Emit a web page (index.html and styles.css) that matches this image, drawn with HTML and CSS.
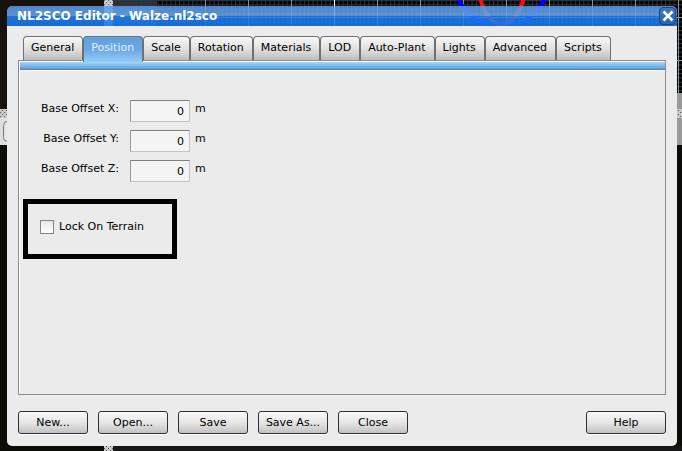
FILE: index.html
```html
<!DOCTYPE html>
<html lang="en">

<head>
  <meta charset="UTF-8">
  <meta name="viewport" content="width=device-width, initial-scale=1.0">
  <title>NL2SCO Editor - Walze.nl2sco</title>
  <link rel="stylesheet" href="styles.css">
</head>

<body>
  <!-- track view behind the dialog -->
  <svg class="desktop" viewBox="0 0 682 451" preserveAspectRatio="xMinYMin slice" aria-hidden="true">
    <defs>
      <pattern id="fine" x="248" y="0" width="4.3" height="4.3" patternUnits="userSpaceOnUse">
        <path d="M0.5 0V4.3M0 0.5H4.3" stroke="#30353b" stroke-width="1" />
      </pattern>
      <pattern id="coarse" x="248" y="17" width="43" height="43" patternUnits="userSpaceOnUse">
        <path d="M0.5 0V43M0 0.5H43" stroke="#8b9095" stroke-width="1" />
      </pattern>
      <pattern id="dots" width="4" height="4" patternUnits="userSpaceOnUse">
        <rect width="4" height="4" fill="#c9c9c9" />
        <path d="M0 0h1v1H0zM2 2h1v1H2z" fill="#555" />
      </pattern>
    </defs>
    <rect width="682" height="451" fill="#0b0c08" />
    <rect width="104" height="109" fill="#15110b" />
    <rect x="113" width="569" height="93" fill="#000" />
    <rect x="113" width="44" height="93" fill="#26303f" />
    <rect x="113" width="569" height="93" fill="url(#fine)" />
    <rect x="205" width="477" height="93" fill="url(#coarse)" />
    <path d="M334.5 0V93" stroke="#fff" />
    <path d="M458 -2C464 12 476 25 502 25S538 12 545 -2" fill="none" stroke="#00f" stroke-width="4" />
    <path d="M480 -2C484 12 490 24 502 24S520 12 524 -2" fill="none" stroke="#f01414" stroke-width="4" />
    <rect x="104" width="9" height="451" fill="url(#dots)" />
    <rect y="109" width="20" height="36" fill="#dedede" />
    <rect y="109" width="20" height="9" fill="url(#dots)" />
    <rect x="3.5" y="121.5" width="20" height="20" rx="4" fill="#e6e6e6" stroke="#777" />
    <rect x="670" y="93" width="12" height="52" fill="#999" />
    <rect x="670" y="109" width="12" height="9" fill="url(#dots)" />
    <rect x="113" y="446" width="569" height="5" fill="#171717" />
  </svg>

  <main class="window">
    <header class="titlebar">
      <h1 class="title">NL2SCO Editor - Walze.nl2sco</h1>
      <button class="close" type="button" aria-label="Close window">
        <svg width="12" height="12" viewBox="0 0 12 12">
          <path d="M1.5 1.5L10.5 10.5M10.5 1.5L1.5 10.5" stroke="#fff" stroke-width="2.6" />
        </svg>
      </button>
    </header>

    <form class="content">
      <div class="tabs" role="tablist">
        <button class="tab" type="button" role="tab">General</button>
        <button class="tab active" type="button" role="tab" aria-selected="true">Position</button>
        <button class="tab" type="button" role="tab">Scale</button>
        <button class="tab" type="button" role="tab">Rotation</button>
        <button class="tab" type="button" role="tab">Materials</button>
        <button class="tab" type="button" role="tab">LOD</button>
        <button class="tab" type="button" role="tab">Auto-Plant</button>
        <button class="tab" type="button" role="tab">Lights</button>
        <button class="tab" type="button" role="tab">Advanced</button>
        <button class="tab" type="button" role="tab">Scripts</button>
      </div>

      <section class="panel" role="tabpanel">
        <div class="fields">
          <label for="offsetX">Base Offset X:</label>
          <input type="text" id="offsetX" value="0">
          <span>m</span>
          <label for="offsetY">Base Offset Y:</label>
          <input type="text" id="offsetY" value="0">
          <span>m</span>
          <label for="offsetZ">Base Offset Z:</label>
          <input type="text" id="offsetZ" value="0">
          <span>m</span>
        </div>

        <div class="lock">
          <input type="checkbox" id="lock">
          <label for="lock">Lock On Terrain</label>
        </div>
      </section>

      <footer class="buttons">
        <button class="btn" type="button">New...</button>
        <button class="btn" type="button">Open...</button>
        <button class="btn" type="button">Save</button>
        <button class="btn" type="button">Save As...</button>
        <button class="btn" type="button">Close</button>
        <button class="btn help" type="button">Help</button>
      </footer>
    </form>
  </main>
</body>

</html>
```

FILE: styles.css
```css
* {
  box-sizing: border-box;
}

body {
  margin: 0;
  padding: 6px 5px 5px 7px;
  min-height: 100vh;
  display: flex;
  background-color: #0b0c08;
  color: #000;
}

body,
button,
input {
  font-family: "DejaVu Sans", sans-serif;
  font-size: 11px;
}

.desktop {
  position: absolute;
  top: 0;
  left: 0;
  width: 100%;
  height: 100%;
  z-index: -1;
}

.window {
  flex: 1;
  display: flex;
  flex-direction: column;
  border-radius: 5px;
  overflow: hidden;
}

.titlebar {
  display: flex;
  align-items: center;
  justify-content: space-between;
  height: 20px;
  padding: 0 1px 0 10px;
  background: linear-gradient(rgba(92, 155, 235, 0.85) 0, rgba(104, 168, 240, 0.85) 50%, rgba(34, 130, 245, 0.85) 52%, rgba(22, 120, 240, 0.88) 100%);
}

.title {
  margin: 0;
  font-size: 12px;
  line-height: 16px;
  color: #fff;
}

.close {
  display: flex;
  align-items: center;
  justify-content: center;
  width: 17px;
  height: 18px;
  padding: 0;
  border: 1px solid #1b467d;
  border-radius: 4px;
  background: linear-gradient(#4576b5, #2564b4);
}

.content {
  flex: 1;
  display: flex;
  flex-direction: column;
  padding: 10px 11px 12px;
  background-color: #ebebeb;
}

.tabs {
  display: flex;
  padding-left: 5px;
}

.tab {
  height: 24px;
  padding: 0 8px 3px 7px;
  border: 1px solid #707070;
  border-bottom: 0;
  border-radius: 4px 4px 0 0;
  background: linear-gradient(#f7f7f7, #e2e2e2 50%, #bdbdbd);
  color: #000;
}

.tab.active {
  height: 26px;
  margin-bottom: -2px;
  padding-bottom: 5px;
  z-index: 1;
  background: linear-gradient(#62a0de, #6aa8e4 50%, #94ccf8);
  color: #e4f2ff;
}

.panel {
  flex: 1;
  border: 1px solid #8c8c8c;
  box-shadow: inset 1px 1px #fff;
}

.panel::before {
  content: "";
  display: block;
  height: 7px;
  margin: 1px 0 0 1px;
  border-bottom: 1px solid #667f99;
  background: linear-gradient(#a2d8fc, #5a9fe0);
  box-shadow: 0 1px #fff;
}

.fields {
  display: grid;
  grid-template-columns: 100px 60px auto;
  column-gap: 11px;
  row-gap: 8px;
  padding-top: 30px;
  line-height: 18px;
}

.fields label {
  text-align: right;
}

.fields span {
  margin-left: -6px;
}

.fields input {
  width: 60px;
  height: 22px;
  padding: 0 5px;
  border: 1px solid #c4c4c4;
  border-top: 1px solid #808080;
  border-left-color: #999;
  border-radius: 0;
  background-color: #f4f4f4;
  text-align: right;
}

.lock {
  display: flex;
  align-items: center;
  gap: 5px;
  width: 154px;
  height: 60px;
  margin: 17px 0 0 4px;
  padding: 0 12px 5px;
  border: 5px solid #000;
}

.lock input {
  appearance: none;
  width: 14px;
  height: 14px;
  margin: 0;
  border: 1px solid #858585;
  background: linear-gradient(#e8e8e8, #fff);
}

.lock input:checked {
  background: #2078e2;
}

.buttons {
  display: flex;
  gap: 10px;
  margin-top: 16px;
}

.btn {
  width: 70px;
  height: 23px;
  padding: 0;
  border: 1px solid #30303c;
  border-radius: 3px;
  background: linear-gradient(#fafafa, #e6e6e6 50%, #c2c2c2);
  box-shadow: 0 1px #fff;
  color: #000;
}

.help {
  width: 80px;
  margin-left: auto;
}
```
